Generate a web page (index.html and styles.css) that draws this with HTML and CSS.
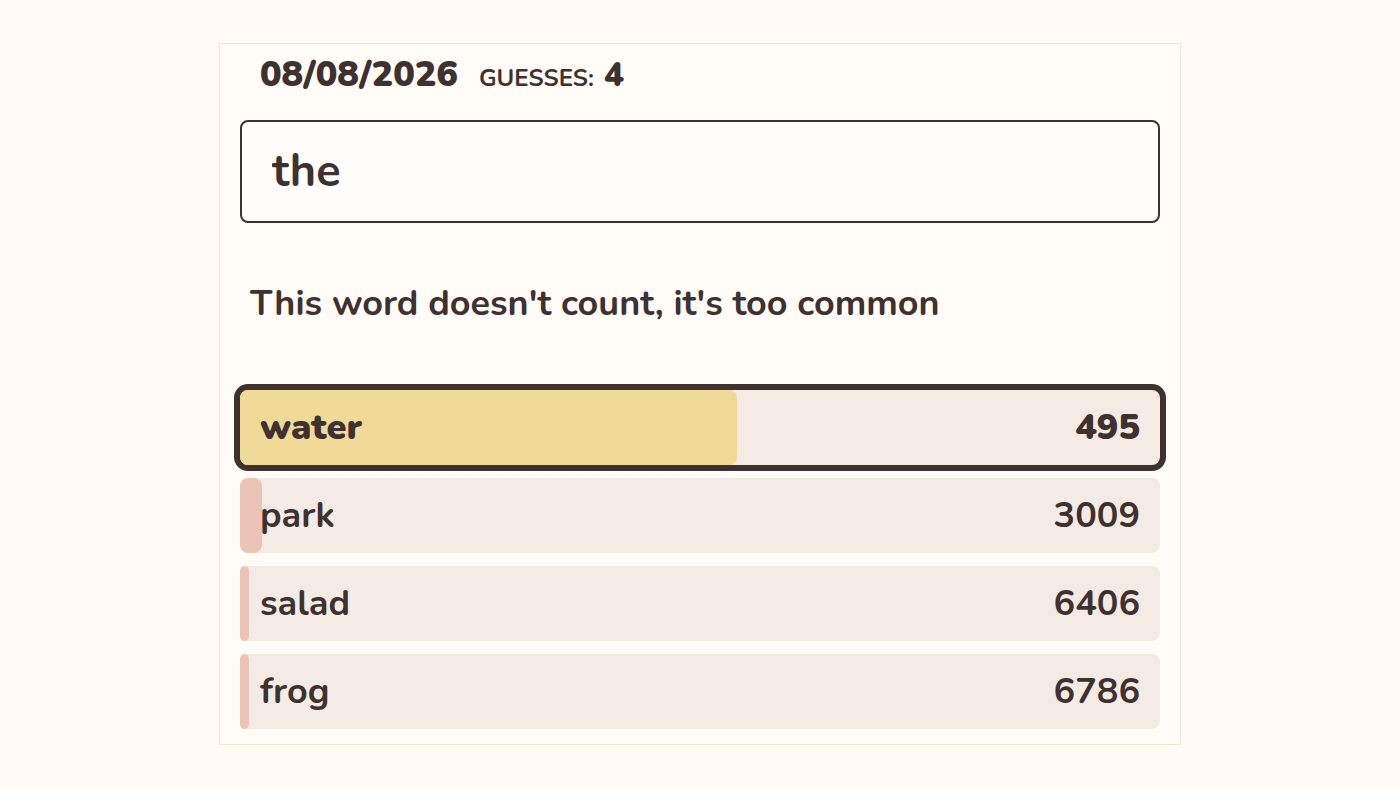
FILE: index.html
```html
<!DOCTYPE html>
<html lang="en">
<head>
    <meta charset="UTF-8">
    <meta name="viewport" content="width=device-width, initial-scale=1.0">
    <title>Guess the Word</title>
    <link rel="stylesheet" href="styles.css">
</head>
<body>
    <div class="game">
        <div class="top-bar">
            <span class="date">08/08/2026</span>
            <span class="guess-label">Guesses:</span>
            <span class="guess-count">4</span>
        </div>

        <input type="text" class="guess-input" value="the">

        <p class="message">This word doesn't count, it's too common</p>

        <div class="guess-list">
            <div class="guess-row current">
                <div class="bar close" style="width: 54%"></div>
                <span class="word">water</span>
                <span class="rank">495</span>
            </div>
            <div class="guess-row">
                <div class="bar far" style="width: 22px"></div>
                <span class="word">park</span>
                <span class="rank">3009</span>
            </div>
            <div class="guess-row">
                <div class="bar far" style="width: 9px"></div>
                <span class="word">salad</span>
                <span class="rank">6406</span>
            </div>
            <div class="guess-row">
                <div class="bar far" style="width: 9px"></div>
                <span class="word">frog</span>
                <span class="rank">6786</span>
            </div>
        </div>
    </div>
</body>
</html>
```

FILE: styles.css
```css
body {
    font-family: "Nunito", "Lato", sans-serif;
    background-color: #fffbf4;
    color: #3f3130;
    margin: 0;
    padding-top: 43px;
}

.game {
    width: 920px;
    margin: 0 auto;
    padding: 0 20px 15px;
    background-color: #fffcf8;
    border: 1px solid #efe6d8;
}

.top-bar {
    display: flex;
    align-items: baseline;
    height: 60px;
    padding: 6px 20px 0;
    box-sizing: border-box;
}

.date {
    font-size: 36px;
    font-weight: 900;
    margin-right: 21px;
}

.guess-label {
    font-size: 24px;
    font-weight: 700;
    text-transform: uppercase;
    margin-right: 10px;
}

.guess-count {
    font-size: 33px;
    font-weight: 900;
}

.guess-input {
    display: block;
    width: 100%;
    height: 103px;
    margin-top: 16px;
    box-sizing: border-box;
    padding: 0 30px;
    font-family: inherit;
    font-size: 45px;
    font-weight: 700;
    color: #3f3130;
    background-color: #fffdfb;
    border: 2px solid #3f3130;
    border-radius: 8px;
    outline: none;
}

.message {
    margin: 0;
    padding: 56px 10px 0;
    height: 111px;
    font-size: 36px;
    font-weight: 700;
}

.guess-list {
    display: flex;
    flex-direction: column;
    gap: 13px;
}

.guess-row {
    position: relative;
    display: flex;
    justify-content: space-between;
    align-items: center;
    height: 75px;
    padding: 0 20px;
    background-color: #f4ece4;
    border-radius: 8px;
    font-size: 36px;
    font-weight: 700;
}

.guess-row.current {
    font-weight: 900;
    outline: 6px solid #3f3130;
    outline-offset: 0;
}

.bar {
    position: absolute;
    left: 0;
    top: 0;
    bottom: 0;
    border-radius: 8px;
}

.bar.close {
    background-color: #f0da98;
}

.bar.far {
    background-color: #edc3b8;
}

.word,
.rank {
    position: relative;
}
```
